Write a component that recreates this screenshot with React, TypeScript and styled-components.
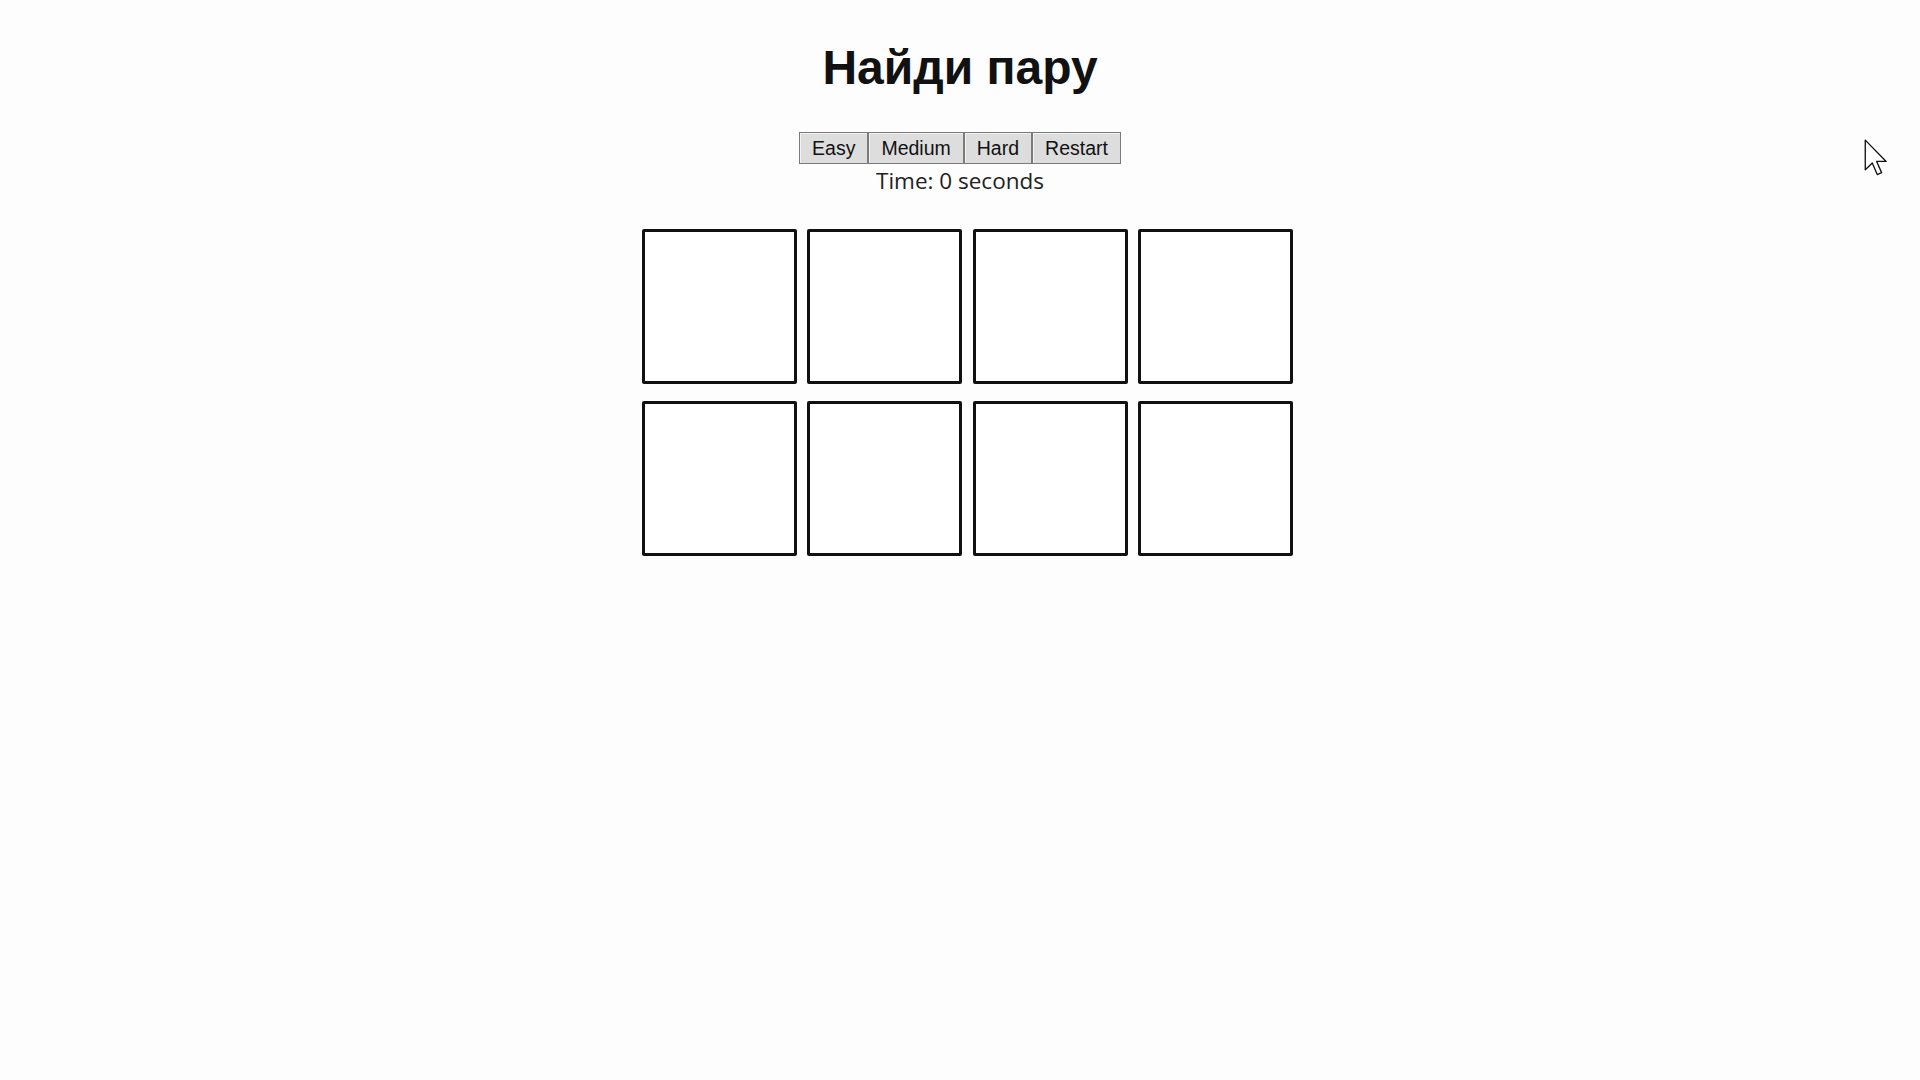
import React, { useState } from "react";
import styled, { createGlobalStyle } from "styled-components";

const GlobalStyle = createGlobalStyle`
  html, body {
    margin: 0;
    padding: 0;
    background: #fdfdfd;
  }
  body {
    font-family: "Liberation Sans", Arial, sans-serif;
    min-height: 1080px;
  }
`;

const Page = styled.div`
  position: relative;
  min-height: 1080px;
  display: flex;
  flex-direction: column;
  align-items: center;
  padding-top: 40px;
  box-sizing: border-box;
`;

const Title = styled.h1`
  margin: 0;
  font-family: "Liberation Sans", Arial, sans-serif;
  font-size: 48px;
  font-weight: 700;
  color: #111;
  line-height: 55px;
`;

const Controls = styled.div`
  display: flex;
  margin-top: 37px;
`;

const ModeButton = styled.button`
  height: 32px;
  padding: 0 12px;
  margin: 0;
  font-family: "Liberation Sans", Arial, sans-serif;
  font-size: 19.5px;
  color: #111;
  background: #dddddd;
  border: 1px solid #7a7a7a;
  box-shadow: inset 1px 1px 0 #f2f2f2;
  border-radius: 0;
  cursor: pointer;
`;

const Timer = styled.div`
  margin-top: 2px;
  font-family: "Open Sans", "Noto Sans", sans-serif;
  font-size: 22.5px;
  color: #222;
  line-height: 29px;
`;

const Board = styled.div`
  display: grid;
  grid-template-columns: repeat(4, 155px);
  column-gap: 10.5px;
  row-gap: 16.5px;
  margin-top: 34px;
  margin-left: 14.5px;
`;

const Card = styled.div`
  width: 155px;
  height: 155px;
  box-sizing: border-box;
  border: 3px solid #111;
  border-radius: 2px;
  background: #ffffff;
  cursor: pointer;
`;

const Pointer = styled.svg`
  position: absolute;
  left: 1864px;
  top: 139px;
  width: 24px;
  height: 38px;
  pointer-events: none;
`;

export default function App() {
  const [seconds] = useState(0);
  const cards = Array.from({ length: 8 }, (_, i) => i);
  return (
    <>
      <GlobalStyle />
      <Page>
        <Title>Найди пару</Title>
        <Controls>
          <ModeButton>Easy</ModeButton>
          <ModeButton>Medium</ModeButton>
          <ModeButton>Hard</ModeButton>
          <ModeButton>Restart</ModeButton>
        </Controls>
        <Timer>Time: {seconds} seconds</Timer>
        <Board>
          {cards.map((c) => (
            <Card key={c} />
          ))}
        </Board>
        <Pointer viewBox="0 0 12.5 20">
          <path
            d="M0.6 0.6 L0.6 16.2 L4.3 12.6 L6.9 18.7 L9.2 17.7 L6.6 11.8 L11.6 11.8 Z"
            fill="#ffffff"
            stroke="#111"
            strokeWidth="0.7"
            strokeLinejoin="round"
          />
        </Pointer>
      </Page>
    </>
  );
}
